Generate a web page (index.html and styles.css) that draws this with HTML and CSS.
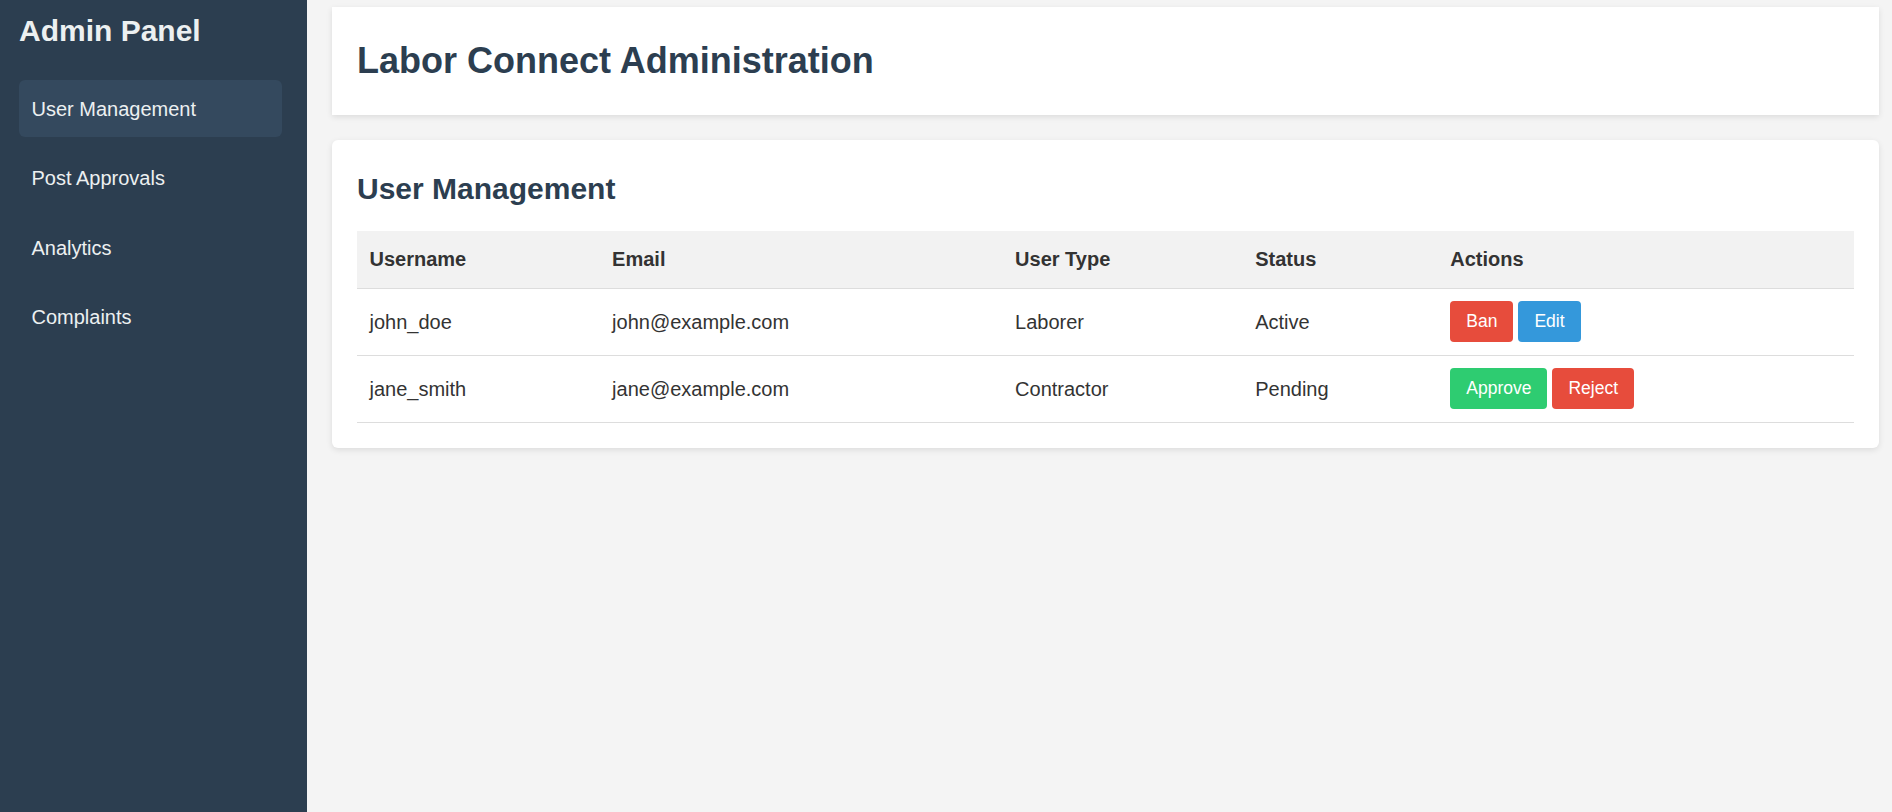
FILE: index.html
```html
<!DOCTYPE html>
<html lang="en">
<head>
<meta charset="utf-8">
<title>Labor Connect Administration</title>
<link rel="stylesheet" href="styles.css">
</head>
<body>
<div class="layout">
  <aside class="sidebar">
    <h2 class="brand">Admin Panel</h2>
    <ul class="nav">
      <li class="nav-item active">User Management</li>
      <li class="nav-item">Post Approvals</li>
      <li class="nav-item">Analytics</li>
      <li class="nav-item">Complaints</li>
    </ul>
  </aside>
  <main class="main">
    <header class="page-header">
      <h1 class="page-title">Labor Connect Administration</h1>
    </header>
    <section class="card">
      <h2 class="card-title">User Management</h2>
      <table class="table">
        <colgroup>
          <col class="col-user">
          <col class="col-email">
          <col class="col-type">
          <col class="col-status">
          <col class="col-actions">
        </colgroup>
        <thead>
          <tr><th>Username</th><th>Email</th><th>User Type</th><th>Status</th><th>Actions</th></tr>
        </thead>
        <tbody>
          <tr>
            <td>john_doe</td><td>john@example.com</td><td>Laborer</td><td>Active</td>
            <td><button class="btn btn-red">Ban</button><button class="btn btn-blue">Edit</button></td>
          </tr>
          <tr>
            <td>jane_smith</td><td>jane@example.com</td><td>Contractor</td><td>Pending</td>
            <td><button class="btn btn-green">Approve</button><button class="btn btn-red">Reject</button></td>
          </tr>
        </tbody>
      </table>
    </section>
  </main>
</div>
</body>
</html>
```

FILE: styles.css
```css
* { box-sizing: border-box; }

html, body {
  margin: 0;
  padding: 0;
}

body {
  font-family: "Liberation Sans", Arial, sans-serif;
  font-size: 20px;
  line-height: 1.6;
  color: #333;
  background: #f4f4f4;
}

.layout {
  display: flex;
  min-height: 100vh;
}

.sidebar {
  width: 307px;
  flex: 0 0 307px;
  background: #2c3e50;
  color: #ecf0f1;
  padding: 7px 25px 0 19px;
}

.brand {
  margin: 0 0 25px;
  font-size: 30px;
  font-weight: bold;
  color: #ecf0f1;
}

.nav {
  list-style: none;
  margin: 0;
  padding: 0;
}

.nav-item {
  padding: 12.5px 12.5px;
  margin-bottom: 12.5px;
  border-radius: 6px;
  color: #ecf0f1;
}

.nav-item.active {
  background: #34495e;
}

.main {
  flex: 1;
  padding: 7px 13px 0 25px;
}

.page-header {
  background: #fff;
  padding: 25px;
  margin-bottom: 25px;
  box-shadow: 0 2px 6px rgba(0, 0, 0, 0.1);
}

.page-title {
  margin: 0;
  font-size: 36px;
  font-weight: bold;
  color: #2c3e50;
}

.card {
  background: #fff;
  padding: 25px;
  border-radius: 6px;
  box-shadow: 0 2px 6px rgba(0, 0, 0, 0.1);
}

.card-title {
  margin: 0 0 18px;
  font-size: 30px;
  font-weight: bold;
  color: #2c3e50;
}

.table {
  width: 100%;
  border-collapse: collapse;
  table-layout: fixed;
}

.col-user { width: 242.6px; }
.col-email { width: 403px; }
.col-type { width: 240.1px; }
.col-status { width: 195.1px; }
.col-actions { width: auto; }

.table th,
.table td {
  text-align: left;
  padding: 12.5px;
  border-bottom: 1px solid #ddd;
}

.table th {
  background: #f2f2f2;
  font-weight: bold;
}

.btn {
  display: inline-block;
  border: none;
  color: #fff;
  font-family: "Liberation Sans", Arial, sans-serif;
  font-size: 17.5px;
  line-height: 21px;
  padding: 10px 16px;
  border-radius: 4px;
  margin-right: 5px;
  cursor: pointer;
}

.btn-red { background: #e74c3c; }
.btn-blue { background: #3498db; }
.btn-green { background: #2ecc71; }
```
